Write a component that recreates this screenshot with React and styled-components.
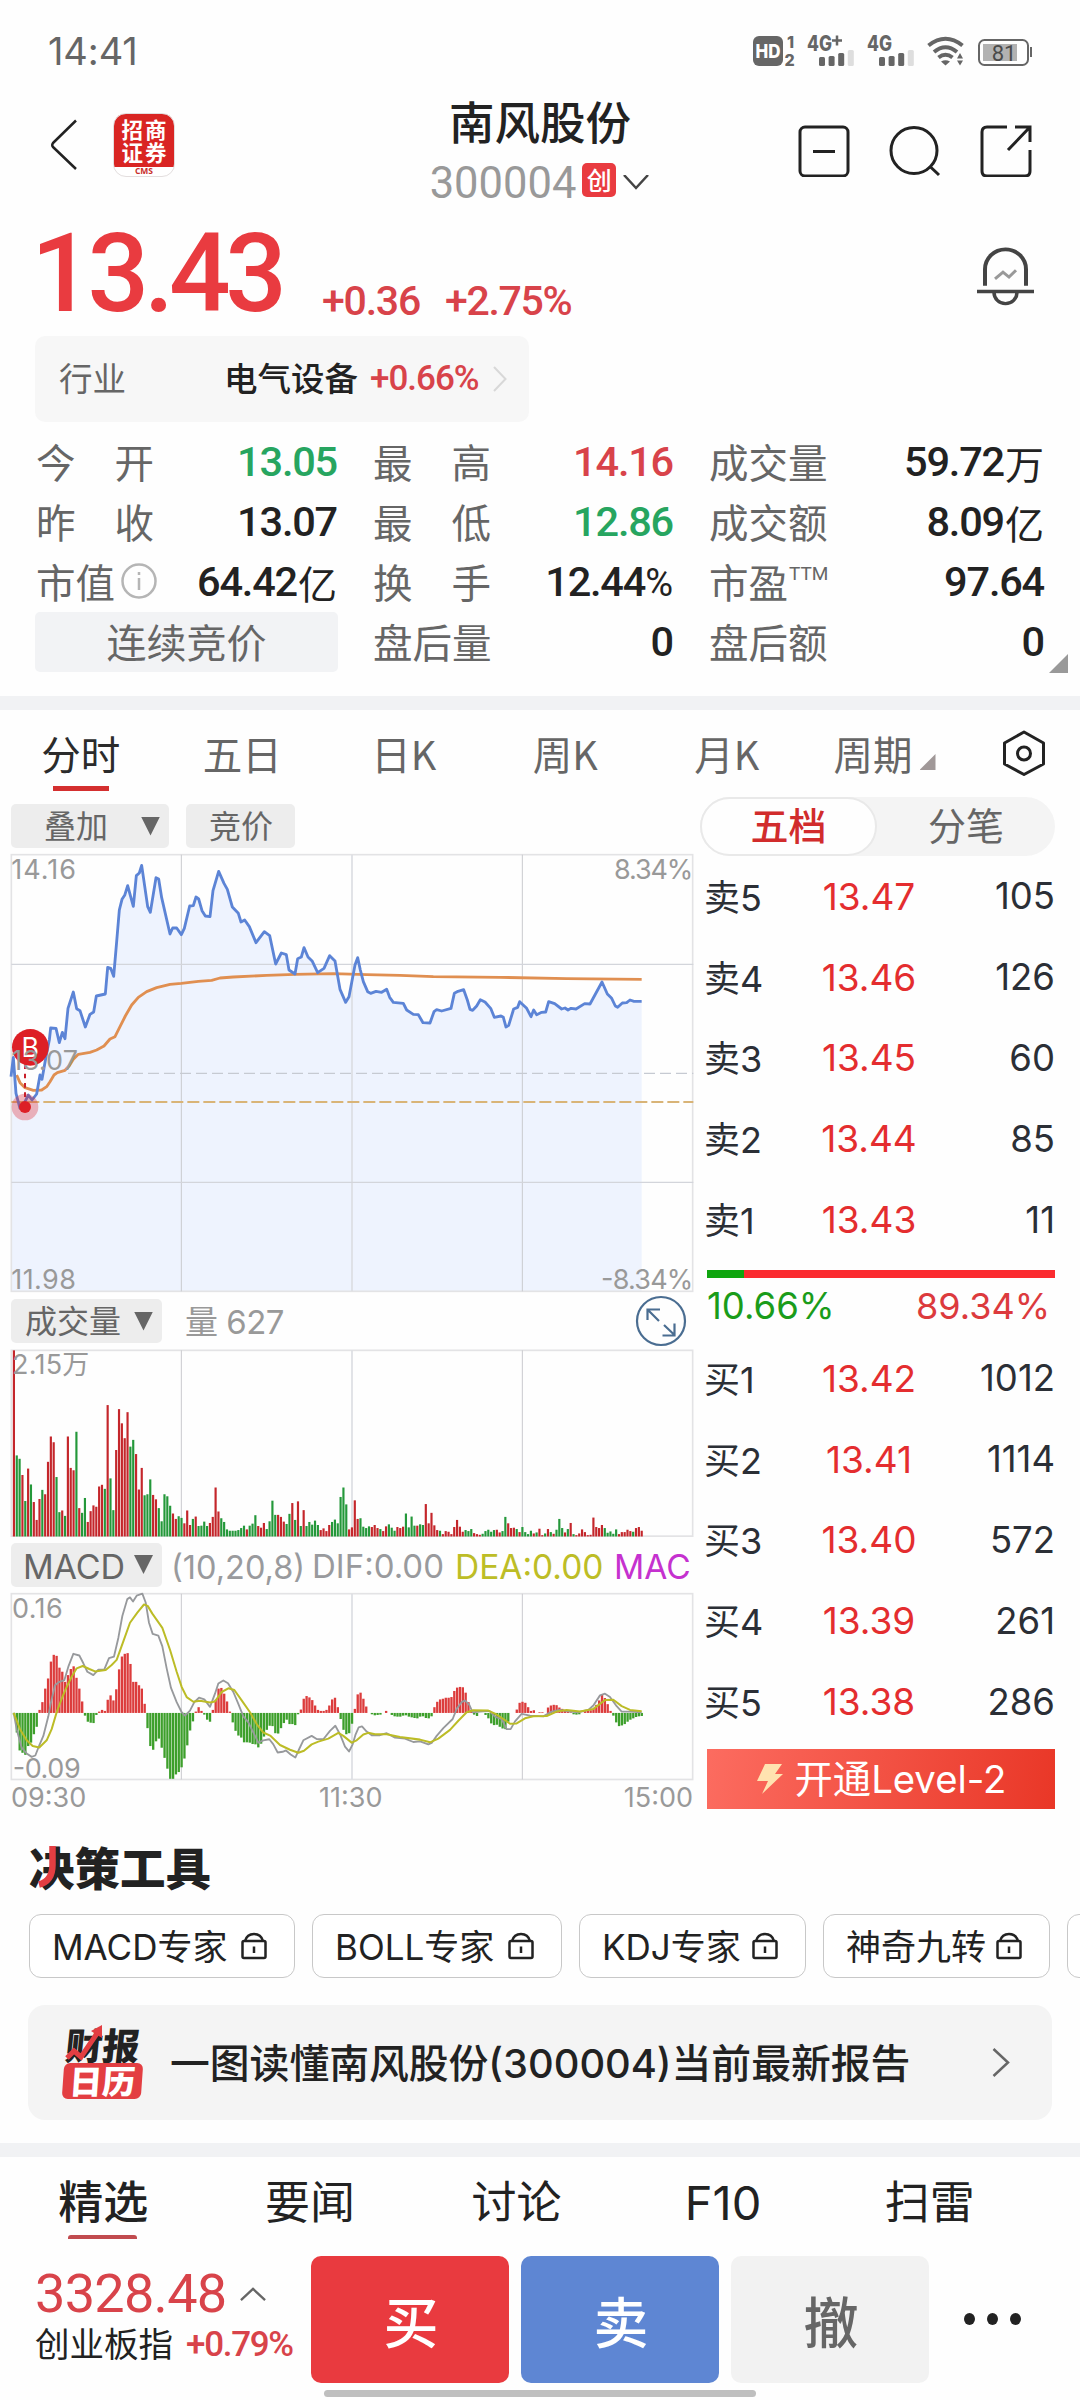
import React from "react";
import styled, { createGlobalStyle, css } from "styled-components";

const SANS = `Inter, "Noto Sans CJK SC", sans-serif`;
const DIN = `Roboto, "Noto Sans CJK SC", sans-serif`;
const RED = "#e93b40";
const UP = "#d8434a";
const DOWN = "#27a560";
const INK = "#222222";
const GREY = "#666666";

const Global = createGlobalStyle`
  * { box-sizing: border-box; }
  html, body { margin: 0; padding: 0; background: #fefefe; }
  body { overflow: hidden; }
`;

const Page = styled.div`
  width: 1080px;
  height: 2400px;
  overflow: hidden;
  background: #fefefe;
  font-family: ${SANS};
  color: ${INK};
  display: flex;
  flex-direction: column;
  white-space: nowrap;
`;

const Txt = styled.span`
  font-family: ${(p) => (p.$din ? DIN : SANS)};
  font-size: ${(p) => p.$size}px;
  line-height: ${(p) => p.$lh || p.$size * 1.2}px;
  font-weight: ${(p) => p.$w || 400};
  letter-spacing: ${(p) => p.$ls || 0}px;
  width: ${(p) => (p.$width ? `${p.$width}px` : "auto")};
  padding-top: ${(p) => p.$drop || 0}px;
  color: ${(p) => p.$c || "inherit"};
  display: block;
`;

/* ---------- status bar ---------- */
const StatusBar = styled.div`
  height: 102px;
  flex: none;
  padding: 0 48px;
  display: flex;
  align-items: center;
  justify-content: space-between;
  color: ${GREY};
`;
const StatusIcons = styled.svg`
  width: 284px;
  height: 40px;
  margin-right: -2px;
`;

/* ---------- header ---------- */
const Header = styled.header`
  height: 110px;
  flex: none;
  display: grid;
  grid-template-columns: 380px 320px 380px;
`;
const HeaderLeft = styled.div`
  display: flex;
  padding: 11px 0 0 50px;
  gap: 35px;
`;
const BackIcon = styled.svg`
  width: 28px;
  height: 51px;
  margin-top: 6px;
`;
const Brand = styled.div`
  width: 62px;
  height: 64px;
  border-radius: 13px;
  border: 1px solid #e3dede;
  background: linear-gradient(#d92523 53px, #ffffff 53px);
  display: flex;
  flex-direction: column;
  align-items: center;
`;
const BrandLine = styled.div`
  height: 23px;
  color: #fff;
  font: 700 21.5px/23px "Noto Sans CJK SC", sans-serif;
  letter-spacing: 2px;
  padding-left: 2px;
  position: relative;
  top: 3px;
`;
const BrandFoot = styled.div`
  font: 700 8.5px/10px "Open Sans", sans-serif;
  margin-top: 6px;
  color: #c9302c;
`;
const TitleBlock = styled.div`
  display: flex;
  flex-direction: column;
  align-items: center;
  margin-top: -1px;
`;
const CodeLine = styled.div`
  display: flex;
  align-items: center;
  height: 40px;
  margin-top: 16px;
  margin-left: -1px;
`;
const BoardBadge = styled.span`
  width: 34px;
  height: 34px;
  margin: -6px 7px 0 6px;
  border-radius: 5px;
  background: ${RED};
  color: #fff;
  font: 500 25px/33px "Noto Sans CJK SC", sans-serif;
  text-align: center;
`;
const HeaderActions = styled.div`
  display: flex;
  justify-content: flex-end;
  gap: 39px;
  padding: 22px 48px 0 0;
`;
const ActionIcon = styled.svg`
  width: 52px;
  height: 53px;
`;

/* ---------- price ---------- */
const PriceRow = styled.section`
  height: 124px;
  flex: none;
  display: flex;
  padding: 0 45px 0 31px;
`;
const LastPrice = styled(Txt)`
  margin-top: -3px;
`;
const Changes = styled.div`
  display: flex;
  padding-top: 65px;
`;
const Bell = styled.svg`
  width: 60px;
  height: 62px;
  margin: 34px 0 0 auto;
`;
const Industry = styled.div`
  flex: none;
  width: 494px;
  height: 86px;
  margin-left: 35px;
  padding: 0 22px 0 24px;
  border-radius: 10px;
  background: #f7f7f7;
  display: flex;
  align-items: center;
`;
const IndustryName = styled(Txt)`
  margin-left: 98px;
  margin-right: 12px;
`;

/* ---------- stats ---------- */
const Stats = styled.section`
  flex: none;
  height: 274px;
  position: relative;
  padding: 16px 36px 0 36px;
  display: grid;
  grid-template-columns: 301px 300px 335px;
  grid-auto-rows: 48px;
  row-gap: 12px;
  column-gap: 36px;
`;
const Stat = styled.div`
  display: flex;
  align-items: center;
  justify-content: space-between;
`;
const StatLabel = styled.span`
  width: 118px;
  display: flex;
  align-items: center;
  justify-content: ${(p) => (p.$spread ? "space-between" : "flex-start")};
  font: 400 39.5px/46px "Noto Sans CJK SC", sans-serif;
  padding-bottom: 2px;
  color: ${GREY};
`;
const StatValue = styled.span`
  display: flex;
  align-items: center;
  font: 500 41.5px/48px ${DIN};
  letter-spacing: -1.2px;
  color: ${(p) => p.$c || INK};
`;
const Unit = styled.span`
  font: 400 39px/46px "Noto Sans CJK SC", sans-serif;
  letter-spacing: 0;
  margin-left: 1px;
`;
const Percent = styled.span`
  font-size: 38px;
  font-weight: 400;
  letter-spacing: 0;
  padding-top: 2px;
`;
const Sup = styled.sup`
  font: 400 19px/20px Roboto, sans-serif;
  margin-top: -14px;
  margin-left: 1px;
`;
const InfoIcon = styled.svg`
  width: 38px;
  height: 38px;
  margin-left: 5px;
  flex: none;
`;
const Phase = styled.div`
  align-self: center;
  height: 60px;
  margin: 0 -1px 0 -1px;
  border-radius: 5px;
  background: #f2f3f5;
  color: ${GREY};
  font: 400 40px/59px "Noto Sans CJK SC", sans-serif;
  text-align: center;
`;
const Corner = styled.span`
  position: absolute;
  right: 12px;
  top: 232px;
  width: 19px;
  height: 19px;
  background: #999;
  clip-path: polygon(100% 0, 100% 100%, 0 100%);
`;
const Divider = styled.div`
  height: ${(p) => p.$h}px;
  flex: none;
  background: #f1f2f4;
`;

/* ---------- period tabs ---------- */
const Tabs = styled.nav`
  height: 87px;
  flex: none;
  display: flex;
  padding-top: 14px;
`;
const Tab = styled.div`
  width: 161.5px;
  position: relative;
  display: flex;
  justify-content: center;
  font: 400 39.5px/58px "Noto Sans CJK SC", sans-serif;
  color: ${(p) => (p.$on ? "#2b2b2b" : GREY)};
  ${(p) =>
    p.$on &&
    css`
      &::after {
        content: "";
        position: absolute;
        left: 53px;
        top: 62px;
        width: 56px;
        height: 5px;
        background: #d42f2f;
      }
    `}
`;
const MoreTab = styled(Tab)`
  width: 128px;
  justify-content: flex-end;
`;
const MoreCorner = styled.span`
  width: 16px;
  height: 16px;
  margin: 30px 0 0 7px;
  background: #a09898;
  clip-path: polygon(100% 0, 100% 100%, 0 100%);
`;
const Hex = styled.svg`
  width: 44px;
  height: 48px;
  margin: 5px 0 0 66px;
`;

/* ---------- charts ---------- */
const Main = styled.section`
  flex: none;
  height: 1033px;
  display: flex;
`;
const ChartColumn = styled.div`
  width: 683px;
  margin-left: 11px;
  padding-top: 7px;
  display: flex;
  flex-direction: column;
`;
const ChartBar = styled.div`
  height: 44px;
  flex: none;
  margin-bottom: ${(p) => p.$mb}px;
  display: flex;
  align-items: center;
  position: relative;
`;
const Picker = styled.div`
  width: ${(p) => p.$width}px;
  height: 44px;
  margin-right: ${(p) => p.$mr || 0}px;
  padding: 0 ${(p) => p.$pr || 0}px 0 ${(p) => p.$pl}px;
  border-radius: 5px;
  background: #ededed;
  color: ${GREY};
  display: flex;
  align-items: center;
  justify-content: space-between;
`;
const Caret = styled.span`
  width: 19px;
  height: 19px;
  background: #666;
  clip-path: polygon(0 0, 100% 0, 50% 100%);
`;
const Expand = styled.svg`
  width: 52px;
  height: 52px;
  position: absolute;
  right: 7px;
  top: -4px;
`;
const Plot = styled.svg`
  width: 683px;
  height: ${(p) => p.$h}px;
  margin-bottom: ${(p) => p.$mb || 0}px;
  display: block;
  flex: none;
  overflow: visible;
  text {
    font-family: ${SANS};
    fill: #999;
  }
`;
const TimeAxis = styled.div`
  display: flex;
  justify-content: space-between;
  color: #999;
  padding: 0 1px 0 0;
`;

/* ---------- order book ---------- */
const BookColumn = styled.div`
  width: 355px;
  margin-left: 6px;
  display: flex;
  flex-direction: column;
`;
const Switch = styled.div`
  height: 59px;
  border-radius: 30px;
  background: #f4f4f4;
  display: flex;
`;
const SwitchItem = styled.div`
  width: ${(p) => (p.$on ? 177 : 178)}px;
  border-radius: 30px;
  border: 2px solid ${(p) => (p.$on ? "#e9e9e9" : "transparent")};
  background: ${(p) => (p.$on ? "#fefefe" : "transparent")};
  color: ${(p) => (p.$on ? "#d12c2c" : GREY)};
  font: ${(p) => (p.$on ? 500 : 400)} 38px/50px "Noto Sans CJK SC", sans-serif;
  text-align: center;
`;
const Level = styled.div`
  height: 80.8px;
  padding: 0 0 0 4px;
  display: grid;
  grid-template-columns: 119px 92px 1fr;
  align-items: center;
  font-size: 36.5px;
  color: #2b2f36;
`;
const LevelName = styled.span`
  font-size: 36px;
  padding-bottom: 3px;
`;
const LevelPrice = styled.span`
  color: #e42d2f;
  font-size: 37px;
  display: flex;
  justify-content: center;
`;
const LevelQty = styled.span`
  text-align: right;
`;
const Ratio = styled.div`
  margin: 10px 0 0 7px;
  height: 8px;
  display: flex;
  background: #fb2b2f;
`;
const RatioBuy = styled.div`
  background: #0fa50f;
`;
const RatioText = styled.div`
  height: 60px;
  display: flex;
  align-items: center;
  justify-content: space-between;
  padding: 0 5px 2px 7px;
`;
const LevelTwo = styled.div`
  height: 60px;
  margin: 7px 0 0 7px;
  background: linear-gradient(100deg, #fc6c60, #e93727);
  color: #fff;
  display: flex;
  align-items: center;
  justify-content: center;
  gap: 11px;
`;

/* ---------- tools ---------- */
const Tools = styled.section`
  flex: none;
  height: 313px;
  padding: 10px 0 0 28px;
`;
const ToolsTitle = styled.h2`
  margin: 0 0 0 1px;
  height: 74px;
  position: relative;
  font: 900 45.5px/52px "Noto Sans CJK SC", sans-serif;
`;
const Stroke = styled.svg`
  position: absolute;
  left: 6px;
  top: 5px;
  width: 28px;
  height: 46px;
`;
const Chips = styled.div`
  display: flex;
  gap: 17px;
  margin-left: 1px;
`;
const Chip = styled.div`
  flex: none;
  width: ${(p) => p.$width}px;
  height: 64px;
  padding: 0 27px 0 22px;
  border: 1px solid #c8c8c8;
  border-radius: 12px;
  background: #fff;
  display: flex;
  align-items: center;
  justify-content: space-between;
`;
const Lock = styled.svg`
  width: 26px;
  height: 28px;
  flex: none;
`;
const Banner = styled.div`
  width: 1024px;
  height: 115px;
  margin-top: 27px;
  padding: 0 42px 0 34px;
  border-radius: 17px;
  background: #f4f4f4;
  display: flex;
  align-items: center;
`;
const Calendar = styled.div`
  width: 84px;
  height: 76px;
  margin-right: 24px;
  position: relative;
`;
const CalTop = styled.div`
  font: 900 37px/38px "Noto Sans CJK SC", sans-serif;
  transform: skewX(-6deg);
  padding-left: 4px;
  height: 38px;
`;
const CalBottom = styled.div`
  width: 79px;
  height: 36px;
  border-radius: 6px;
  transform: skewX(-4deg);
  margin-left: 1px;
  background: #e33e42;
  color: #fff;
  font: 900 33px/34px "Noto Sans CJK SC", sans-serif;
  text-align: center;
`;
const CalArrow = styled.svg`
  position: absolute;
  left: 2px;
  top: 0;
  width: 44px;
  height: 36px;
`;
const Chevron = styled.svg`
  width: ${(p) => p.$w}px;
  height: ${(p) => p.$h}px;
  margin-left: ${(p) => p.$ml || 0};
  flex: none;
`;

/* ---------- info tabs and trade bar ---------- */
const InfoTabs = styled.nav`
  height: 90px;
  flex: none;
  display: flex;
  padding: 0 47px 0 0;
`;
const InfoTab = styled.div`
  width: 206.8px;
  position: relative;
  display: flex;
  justify-content: center;
  font: 400 ${(p) => p.$size || 45}px/92px ${SANS};
  ${(p) =>
    p.$on &&
    css`
      font-weight: 500;
      &::after {
        content: "";
        position: absolute;
        left: 68px;
        bottom: 8px;
        width: 69px;
        height: 4px;
        border-radius: 3px 3px 0 0;
        background: #c14b4f;
      }
    `}
`;
const TradeBar = styled.footer`
  flex: none;
  height: 136px;
  display: flex;
  padding: 9px 0 0 35px;
`;
const Index = styled.div`
  width: 276px;
  padding-top: 8px;
`;
const IndexLine = styled.div`
  display: flex;
  align-items: center;
  gap: ${(p) => p.$gap}px;
  height: ${(p) => p.$h}px;
`;
const TradeButton = styled.button`
  width: 198px;
  height: 127px;
  margin: 0 12px 0 0;
  padding: 0 0 0 2px;
  border: 0;
  border-radius: 10px;
  background: ${(p) => p.$bg};
  color: ${(p) => p.$c || "#fff"};
  font: 500 55px/127px "Noto Sans CJK SC", sans-serif;
`;
const Dots = styled.div`
  display: flex;
  gap: 12px;
  padding: 57px 0 0 23px;
`;
const Dot = styled.span`
  width: 11px;
  height: 12px;
  border-radius: 50%;
  background: #222;
`;
const HomeBar = styled.div`
  width: 432px;
  height: 7px;
  flex: none;
  margin: 7px 0 0 324px;
  border-radius: 4px;
  background: #bfbfbf;
`;

/* ---------- data ---------- */
const PRICE =
  "33,830 40,772 48,880 60,925 75,905 85,885 96,900 110,882 120,825 126,838 138,770 148,720 152,684 168,685 178,728 187,697 195,716 204,625 220,576 230,626 240,632 256,681 270,643 281,636 289,588 316,582 323,502 332,505 341,529 350,425 358,330 366,298 374,286 383,257 400,319 409,227 418,219 425,196 443,320 451,337 468,233 476,237 485,293 510,402 518,384 530,384 544,404 553,385 569,318 580,317 588,291 596,297 606,332 616,348 630,350 639,272 656,214 672,250 682,268 697,321 715,340 723,366 734,360 748,380 768,428 793,395 809,407 827,492 844,459 859,464 867,510 885,522 893,476 904,471 912,443 924,471 937,484 953,518 972,505 989,467 1005,483 1020,568 1037,607 1047,590 1065,495 1073,473 1081,510 1090,545 1103,575 1112,580 1128,574 1145,577 1160,568 1169,592 1180,607 1210,610 1220,630 1240,643 1255,644 1269,668 1290,669 1302,635 1310,629 1325,633 1353,625 1363,580 1374,574 1391,569 1402,600 1410,628 1418,631 1430,618 1441,599 1455,606 1472,625 1483,652 1503,648 1510,652 1518,681 1526,676 1541,627 1553,622 1559,605 1580,625 1593,650 1601,630 1610,644 1625,637 1637,636 1646,605 1664,611 1685,627 1695,624 1704,630 1713,625 1728,627 1754,611 1770,612 1806,546 1822,582 1835,595 1846,618 1853,622 1867,609 1880,608 1890,600 1902,604 1925,604";
const AVERAGE =
  "50,825 60,848 75,863 100,871 125,870 140,860 150,845 162,825 172,818 195,811 208,797 220,778 235,763 270,757 290,750 312,738 330,717 345,710 360,680 376,648 395,615 415,592 440,575 470,563 510,553 544,550 595,544 635,541 660,534 700,531 800,526 885,523 1000,521 1100,524 1200,526 1300,530 1500,532 1700,536 1925,538";
const DIF =
  "41,1252 50,1300 65,1355 80,1372 95,1382 106,1378 115,1355 130,1320 145,1262 152,1225 165,1170 178,1160 193,1155 205,1115 220,1077 238,1082 250,1105 262,1130 280,1140 295,1124 313,1123 327,1090 342,1085 355,1030 367,965 382,915 390,910 399,922 410,905 427,899 437,925 447,985 458,1018 475,1023 487,1055 500,1120 513,1178 530,1220 545,1250 555,1260 570,1245 583,1220 597,1207 613,1212 630,1234 645,1195 655,1165 670,1156 684,1164 700,1190 715,1225 730,1262 745,1280 765,1320 775,1340 790,1333 808,1330 820,1345 833,1369 848,1367 858,1363 872,1375 886,1384 898,1358 910,1333 935,1320 950,1329 970,1330 990,1305 1006,1290 1020,1315 1035,1352 1047,1366 1058,1345 1066,1318 1076,1295 1086,1292 1100,1307 1115,1318 1140,1318 1160,1312 1185,1325 1215,1328 1240,1338 1260,1336 1285,1345 1295,1341 1310,1320 1330,1297 1358,1270 1370,1240 1385,1220 1395,1215 1408,1228 1418,1250 1440,1248 1468,1246 1485,1263 1505,1270 1520,1300 1532,1300 1545,1277 1565,1255 1590,1260 1630,1262 1655,1248 1680,1243 1710,1248 1735,1250 1765,1243 1780,1230 1800,1200 1815,1195 1830,1205 1850,1232 1865,1248 1890,1248 1925,1250";
const DEA =
  "41,1252 60,1300 80,1333 98,1350 118,1354 140,1333 155,1300 170,1250 185,1210 200,1175 215,1145 230,1120 248,1113 268,1122 285,1129 317,1125 335,1110 350,1095 370,1040 390,985 412,955 432,931 443,935 457,958 487,1000 510,1065 530,1130 545,1175 560,1205 580,1219 600,1216 630,1221 645,1218 665,1190 685,1179 703,1184 725,1215 750,1250 770,1285 790,1310 812,1320 840,1347 870,1361 895,1370 912,1364 935,1345 955,1337 985,1328 1015,1311 1030,1320 1055,1340 1070,1333 1090,1316 1105,1311 1125,1315 1160,1315 1200,1323 1260,1331 1290,1339 1315,1328 1350,1302 1375,1275 1400,1250 1420,1244 1465,1245 1485,1254 1510,1270 1530,1284 1550,1283 1575,1268 1600,1262 1640,1261 1670,1248 1700,1243 1740,1248 1780,1240 1800,1225 1815,1214 1840,1213 1865,1232 1890,1243 1925,1247";

const VOLUME =
  "178r 489g 499g 547r 624g 528r 575g 627r 680r 618r 591g 604r 508r 433r 450r 553g 657g 652r 668g 433r 526r 533r 419g 645r 659g 615g 686r 654r 637r 641r 581r 576r 588g 340r 557g 651g 473r 352r 394r 438r 361r 463g 443g 485r 590r 526r 607g 604g 560g 606r 619r 645g 684g 604g 610g 638g 661r 677r 669g 674g 690r 652r 695r 677g 670r 698g 697g 685g 698g 689r 671r 584r 655r 675g 686g 708g 712g 712g 712g 710g 704g 697g 708r 697g 691g 666g 698r 703r 689r 707g 684g 623g 665g 665r 671r 685r 692g 662g 630r 680g 625r 698g 651r 698g 686g 694g 682g 695g 710r 705r 713r 695r 686g 679g 690g 612g 584g 634g 708r 702r 622r 677r 675g 700g 704g 699g 701r 695r 704r 707g 713r 699r 693g 703g 712g 701r 704r 700r 661g 702g 670g 697g 697r 693g 695g 633r 690r 659r 696r 710r 712g 722r 713r 715r 722r 701r 680r 700r 715r 710g 713g 707g 719r 722r 724r 721g 713g 709g 715g 710g 709r 717r 713g 671g 690r 704r 703r 707g 716r 701g 716g 722g 712g 720r 717g 706r 725r 720g 707r 716g 721r 709g 677g 704g 717r 707g 689r 722g 725r 720r 708r 716r 725r 724r 673r 701r 704r 695r 704g 718g 714g 721g 708g 722r 716r 716r 709r 713r 715g 704r 701r 712r";
const HIST = [
  1258, 1310, 1363, 1370, 1376, 1350, 1340, 1315, 1293, 1243, 1220, 1180, 1150, 1100, 1080, 1083, 1118, 1130, 1160, 1140,
  1122, 1114, 1148, 1180, 1218, 1260, 1278, 1281, 1282, 1258, 1248, 1243, 1246, 1213, 1200, 1215, 1182, 1123, 1085, 1077,
  1075, 1107, 1160, 1160, 1170, 1180, 1225, 1297, 1350, 1361, 1336, 1328, 1355, 1385, 1417, 1447, 1447, 1434, 1427, 1413,
  1387, 1348, 1304, 1277, 1248, 1235, 1246, 1257, 1272, 1278, 1243, 1213, 1180, 1178, 1195, 1218, 1248, 1280, 1305, 1319,
  1325, 1339, 1339, 1340, 1344, 1345, 1354, 1343, 1322, 1302, 1290, 1291, 1312, 1313, 1297, 1282, 1272, 1285, 1285, 1288,
  1256, 1242, 1210, 1202, 1206, 1214, 1230, 1243, 1246, 1246, 1243, 1230, 1212, 1207, 1235, 1270, 1302, 1315, 1312, 1284,
  1240, 1197, 1192, 1210, 1233, 1252, 1256, 1259, 1258, 1257, 1252, 1246, 1252, 1258, 1262, 1263, 1263, 1260, 1259, 1263,
  1265, 1267, 1268, 1263, 1262, 1267, 1268, 1262, 1235, 1219, 1212, 1210, 1207, 1207, 1205, 1187, 1177, 1175, 1176, 1192,
  1220, 1243, 1257, 1261, 1252, 1252, 1258, 1268, 1283, 1288, 1287, 1293, 1298, 1300, 1278, 1252, 1252, 1242, 1222, 1219,
  1222, 1235, 1246, 1244, 1252, 1250, 1250, 1252, 1236, 1230, 1228, 1229, 1236, 1240, 1246, 1246, 1250, 1256, 1257, 1256,
  1252, 1246, 1246, 1244, 1240, 1228, 1215, 1198, 1208, 1226, 1246, 1260, 1280, 1291, 1289, 1285, 1278, 1272, 1268, 1264,
  1262, 1261,
];
const SELLS = [
  ["卖5", "13.47", "105"],
  ["卖4", "13.46", "126"],
  ["卖3", "13.45", "60"],
  ["卖2", "13.44", "85"],
  ["卖1", "13.43", "11"],
];
const BUYS = [
  ["买1", "13.42", "1012"],
  ["买2", "13.41", "1114"],
  ["买3", "13.40", "572"],
  ["买4", "13.39", "261"],
  ["买5", "13.38", "286"],
];
const CHIPS = [
  ["MACD专家", 266],
  ["BOLL专家", 250],
  ["KDJ专家", 227],
  ["神奇九转", 227],
];
const STEP = 8.522;

function Frame({ top, bottom }) {
  return (
    <>
      <rect x="34" y={top} width="2044" height={bottom - top} fill="none" stroke="#e3e3e5" strokeWidth="5" />
      <path d={`M544 ${top}V${bottom}M1567 ${top}V${bottom}`} stroke="#c9cace" strokeWidth="3" />
      <path d={`M1056 ${top}V${bottom}`} stroke="#dcdee3" strokeWidth="5" />
    </>
  );
}

function PriceChart() {
  return (
    <Plot $h={438} $mb={7} viewBox="33 162 2049 1314">
      <polygon points={`${PRICE} 1925,1474 33,1474`} fill="#eef3fe" />
      <Frame top={164} bottom={1474} />
      <path d="M34 493H2080M34 1147H2080" stroke="#d3d5db" strokeWidth="3.5" />
      <path d="M204 820H2080" stroke="#c6cad2" strokeWidth="3.5" strokeDasharray="33 15" />
      <path d="M34 906H2080" stroke="#d9b477" strokeWidth="6" strokeDasharray="36 12" />
      <polyline points={AVERAGE} fill="none" stroke="#e08f51" strokeWidth="8.5" strokeLinejoin="round" />
      <polyline points={PRICE} fill="none" stroke="#5c84d6" strokeWidth="8.5" strokeLinejoin="round" />
      <circle cx="75" cy="921" r="40" fill="#dd1f2a" opacity="0.32" />
      <circle cx="75" cy="921" r="18" fill="#dd1f26" />
      <path d="M75 793V905" stroke="#c9202b" strokeWidth="6" strokeDasharray="14 14" />
      <circle cx="91" cy="742" r="55" fill="#dd1f26" />
      <text x="91" y="770" fontSize="80" textAnchor="middle" style={{ fill: "#fff" }}>B</text>
      <text x="34" y="237" fontSize="81" textLength="194">14.16</text>
      <text x="34" y="811" fontSize="81" textLength="200">13.07</text>
      <text x="34" y="1467" fontSize="81" textLength="194">11.98</text>
      <text x="1842" y="237" fontSize="81" textLength="238">8.34%</text>
      <text x="1803" y="1467" fontSize="81" textLength="277">-8.34%</text>
    </Plot>
  );
}

function VolumeChart() {
  return (
    <Plot $h={188.5} $mb={5} viewBox="33 174 2049 558" preserveAspectRatio="none">
      <Frame top={178} bottom={728} />
      {VOLUME.split(" ").map((bar, i) => {
        const y = parseInt(bar, 10);
        return (
          <rect key={i} x={38.5 + i * STEP} y={y} width="6.5" height={729 - y} fill={bar.endsWith("r") ? "#c4262b" : "#24983a"} />
        );
      })}
      <text x="36" y="248" fontSize="81" textLength="232">2.15万</text>
    </Plot>
  );
}

function MacdChart() {
  return (
    <Plot $h={188.5} viewBox="33 894 2049 558" preserveAspectRatio="none">
      <Frame top={899} bottom={1449} />
      {HIST.map((y, i) =>
        y === 1252 ? null : (
          <rect
            key={i}
            x={38.5 + i * STEP}
            y={Math.min(y, 1252)}
            width="7"
            height={Math.abs(1252 - y)}
            fill={y < 1252 ? "#dc3c3c" : "#3d9f2b"}
          />
        )
      )}
      <polyline points={DIF} fill="none" stroke="#97999c" strokeWidth="5.5" strokeLinejoin="round" />
      <polyline points={DEA} fill="none" stroke="#bcbc26" strokeWidth="6" strokeLinejoin="round" />
      <text x="36" y="970" fontSize="81" textLength="152">0.16</text>
      <text x="38" y="1444" fontSize="81" textLength="204">-0.09</text>
    </Plot>
  );
}

function LevelRow({ row }) {
  return (
    <Level>
      <LevelName>{row[0]}</LevelName>
      <LevelPrice>{row[1]}</LevelPrice>
      <LevelQty>{row[2]}</LevelQty>
    </Level>
  );
}

function StatCell({ label, value, unit, color, spread, children }) {
  return (
    <Stat>
      <StatLabel $spread={spread}>
        {spread ? [...label].map((c) => <span key={c}>{c}</span>) : label}
        {children}
      </StatLabel>
      <StatValue $c={color}>
        {value}
        {unit === "%" ? <Percent>%</Percent> : unit && <Unit>{unit}</Unit>}
      </StatValue>
    </Stat>
  );
}

export default function App() {
  return (
    <Page>
      <Global />
      <StatusBar>
        <Txt $size={38} $ls={-0.1} $drop={1}>14:41</Txt>
        <StatusIcons viewBox="750 31 284 40" fill="#666">
          <rect x="753" y="36" width="30" height="30" rx="6" />
          <g fontFamily="Inter, sans-serif" fontWeight="800">
            <text x="755.5" y="58" fontSize="19" fill="#fff" textLength="25" lengthAdjust="spacingAndGlyphs">HD</text>
            <text x="787" y="48" fontSize="16">1</text>
            <text x="784.5" y="66" fontSize="16">2</text>
            <text x="807" y="51" fontSize="21" textLength="25" lengthAdjust="spacingAndGlyphs">4G</text>
            <text x="867" y="51" fontSize="21" textLength="25" lengthAdjust="spacingAndGlyphs">4G</text>
          </g>
          <path d="M832 40.5H842M837 35.5V45.5" stroke="#666" strokeWidth="2.5" />
          {[819, 879].map((x) => (
            <g key={x}>
              <rect x={x} y="57" width="6" height="9" rx="1.5" />
              <rect x={x + 9.6} y="56" width="6" height="10" rx="1.5" />
              <rect x={x + 19.2} y="53" width="6" height="13" rx="1.5" />
              <rect x={x + 28.8} y="50" width="6" height="16" rx="1.5" fill="#dedede" />
            </g>
          ))}
          <g fill="none" stroke="#666" strokeWidth="4">
            <path d="M928.5 45.5Q945.5 32 962.5 45.5" />
            <path d="M934 52Q945.5 42.5 957 52" />
            <path d="M938.5 57.5Q945.5 52 952.5 57.5" />
          </g>
          <path d="M941 61.5Q945.5 59 950 61.5L945.5 65.5Z" />
          <path d="M957 58.5L960 53L963 58.5ZM957 60.5L960 65.5L963 60.5Z" />
          <rect x="979" y="40" width="49" height="25" rx="5.5" fill="none" stroke="#666" strokeWidth="2" />
          <rect x="983" y="44" width="34" height="17" fill="#b2b2b2" />
          <rect x="1030" y="47" width="2" height="10" />
          <text x="1004" y="60.5" fontFamily="Roboto, sans-serif" fontSize="22" fill="#4a4a4a" textAnchor="middle">81</text>
        </StatusIcons>
      </StatusBar>

      <Header>
        <HeaderLeft>
          <BackIcon viewBox="0 0 28 51" fill="none" stroke="#222" strokeWidth="2.5" strokeLinejoin="round">
            <path d="M26 1.5L3 24Q1.5 26 3 28L26 50" />
          </BackIcon>
          <Brand>
            <BrandLine>招商</BrandLine>
            <BrandLine>证券</BrandLine>
            <BrandFoot>CMS</BrandFoot>
          </Brand>
        </HeaderLeft>
        <TitleBlock>
          <Txt $size={45.5} $w={500} $lh={46}>南风股份</Txt>
          <CodeLine>
            <Txt $size={43.5} $din $c="#999" $lh={50} $drop={1}>300004</Txt>
            <BoardBadge>创</BoardBadge>
            <Chevron $w={26} $h={16} viewBox="0 0 26 16" fill="none" stroke="#444" strokeWidth="2.5">
              <path d="M1 0L13 13L25 0" />
            </Chevron>
          </CodeLine>
        </TitleBlock>
        <HeaderActions>
          <ActionIcon viewBox="0 0 52 53" fill="none" stroke="#222" strokeWidth="3">
            <rect x="2" y="3" width="48" height="49" rx="5" />
            <path d="M15 27.5H37" />
          </ActionIcon>
          <ActionIcon viewBox="0 0 52 53" fill="none" stroke="#222" strokeWidth="3">
            <circle cx="25" cy="26.5" r="23" />
            <path d="M40.5 42L50 51" />
          </ActionIcon>
          <ActionIcon viewBox="0 0 52 53" fill="none" stroke="#222" strokeWidth="3">
            <path d="M27 3H7Q2 3 2 8V47Q2 52 7 52H45Q50 52 50 47V26" />
            <path d="M35 3H50V18M50 3L28 26" />
          </ActionIcon>
        </HeaderActions>
      </Header>

      <PriceRow>
        <LastPrice $width={291} $din $size={108.5} $w={500} $c={RED} $ls={-5.2}>13.43</LastPrice>
        <Changes>
          <Txt $width={123} $din $size={41} $w={500} $c={UP} $ls={-1.2}>+0.36</Txt>
          <Txt $din $size={41} $w={500} $c={UP} $ls={-1.3}>+2.75%</Txt>
        </Changes>
        <Bell viewBox="975 254 60 64" preserveAspectRatio="none" fill="none" stroke="#444" strokeWidth="4">
          <path d="M985 295V278A20.500 20.500 0 0 1 1026 278V295" />
          <path d="M977 301H1034" strokeWidth="3.5" />
          <path d="M994 302A11.500 11.500 0 0 0 1017 302" strokeWidth="3.5" />
          <path d="M995 288L1003 281L1009 286L1016 279" stroke="#999" strokeWidth="3" />
        </Bell>
      </PriceRow>

      <Industry>
        <Txt $size={33.5} $c={GREY}>行业</Txt>
        <IndustryName $size={33.5} $w={500}>电气设备</IndustryName>
        <Txt $din $size={35} $w={500} $c={UP} $ls={-1}>+0.66%</Txt>
        <Chevron $w={14} $h={26} $ml="14px" viewBox="0 0 14 26" fill="none" stroke="#d8d8d8" strokeWidth="2">
          <path d="M1 1L12.5 13L1 25" />
        </Chevron>
      </Industry>

      <Stats>
        <StatCell label="今开" spread value="13.05" color={DOWN} />
        <StatCell label="最高" spread value="14.16" color={UP} />
        <StatCell label="成交量" value="59.72" unit="万" />
        <StatCell label="昨收" spread value="13.07" />
        <StatCell label="最低" spread value="12.86" color={DOWN} />
        <StatCell label="成交额" value="8.09" unit="亿" />
        <StatCell label="市值" value="64.42" unit="亿">
          <InfoIcon viewBox="0 0 38 38" fill="none" stroke="#b5b5b5" strokeWidth="2.5">
            <circle cx="19" cy="19" r="16.5" />
            <path d="M19 16V28M19 10V13" />
          </InfoIcon>
        </StatCell>
        <StatCell label="换手" spread value="12.44" unit="%" />
        <StatCell label="市盈" value="97.64">
          <Sup>TTM</Sup>
        </StatCell>
        <Phase>连续竞价</Phase>
        <StatCell label="盘后量" value="0" />
        <StatCell label="盘后额" value="0" />
        <Corner />
      </Stats>
      <Divider $h={14} />

      <Tabs>
        <Tab $on>分时</Tab>
        <Tab>五日</Tab>
        <Tab>日K</Tab>
        <Tab>周K</Tab>
        <Tab>月K</Tab>
        <MoreTab>
          周期
          <MoreCorner />
        </MoreTab>
        <Hex viewBox="0 0 44 48" fill="none" stroke="#222" strokeWidth="3">
          <path d="M22 3L41.500 14V35L22 45.500L2.500 35V14Z" strokeLinejoin="round" />
          <circle cx="22" cy="24.5" r="6.5" />
        </Hex>
      </Tabs>

      <Main>
        <ChartColumn>
          <ChartBar $mb={6}>
            <Picker $width={158} $pl={33} $pr={9} $mr={17}>
              <Txt $size={32} $drop={3}>叠加</Txt>
              <Caret />
            </Picker>
            <Picker $width={109} $pl={23}>
              <Txt $size={32} $drop={3}>竞价</Txt>
            </Picker>
          </ChartBar>
          <PriceChart />
          <ChartBar $mb={6}>
            <Picker $width={151} $pl={14} $pr={9} $mr={23}>
              <Txt $size={32} $drop={3}>成交量</Txt>
              <Caret />
            </Picker>
            <Txt $size={33} $c="#999" $ls={-0.5} $drop={3}>量 627</Txt>
            <Expand viewBox="0 0 52 52" fill="none" stroke="#4a6d91" strokeWidth="2.2">
              <circle cx="26" cy="26" r="24" />
              <path d="M12.500 25V14.500H25M13 15L24 26M29 30L39.500 40M27.500 40.500H39.500V28.500" />
            </Expand>
          </ChartBar>
          <VolumeChart />
          <ChartBar $mb={5.5}>
            <Picker $width={151} $pl={12} $pr={9} $mr={9}>
              <Txt $size={34} $ls={-0.1} $drop={5}>MACD</Txt>
              <Caret />
            </Picker>
            <Txt $size={32.5} $width={141} $c="#999a9d" $drop={5}>(10,20,8)</Txt>
            <Txt $size={33} $width={143} $c="#999a9d" $drop={5}>DIF:0.00</Txt>
            <Txt $size={33.5} $width={159} $c="#bdbd26" $drop={5}>DEA:0.00</Txt>
            <Txt $size={33.5} $c="#c531cf" $drop={5}>MAC</Txt>
          </ChartBar>
          <MacdChart />
          <TimeAxis>
            <Txt $size={27} $lh={34}>09:30</Txt>
            <Txt $size={27} $lh={34} $width={72}>11:30</Txt>
            <Txt $size={27} $lh={34}>15:00</Txt>
          </TimeAxis>
        </ChartColumn>

        <BookColumn>
          <Switch>
            <SwitchItem $on>五档</SwitchItem>
            <SwitchItem>分笔</SwitchItem>
          </Switch>
          {SELLS.map((r) => (
            <LevelRow key={r[0]} row={r} />
          ))}
          <Ratio>
            <RatioBuy style={{ width: "10.66%" }} />
          </Ratio>
          <RatioText>
            <Txt $size={36.5} $c="#1a9c1a">10.66%</Txt>
            <Txt $size={36} $c="#dc3a3d">89.34%</Txt>
          </RatioText>
          {BUYS.map((r) => (
            <LevelRow key={r[0]} row={r} />
          ))}
          <LevelTwo>
            <svg width="28" height="32" viewBox="0 0 28 32">
              <path d="M9 1H26L19 11H27L6 31L12 18H1Z" fill="#ffe3b0" />
            </svg>
            <Txt $size={38.3} $drop={3}>开通Level-2</Txt>
          </LevelTwo>
        </BookColumn>
      </Main>

      <Tools>
        <ToolsTitle>
          决策工具
          <Stroke viewBox="0 0 28 46" fill="none" stroke="#e33e42" strokeWidth="6.5">
            <path d="M17.5 1V20Q17.5 36 4 39.5" />
          </Stroke>
        </ToolsTitle>
        <Chips>
          {CHIPS.map(([name, width]) => (
            <Chip key={name} $width={width}>
              <Txt $size={35} $drop={2}>{name}</Txt>
              <Lock viewBox="0 0 26 28" fill="none" stroke="#222" strokeWidth="2.5">
                <rect x="1.5" y="9" width="23" height="17" rx="1.5" />
                <path d="M4 9Q6 2 13 2T22 9M13 14.500V21" />
              </Lock>
            </Chip>
          ))}
          <Chip $width={227} />
        </Chips>
        <Banner>
          <Calendar>
            <CalTop>财报</CalTop>
            <CalBottom>日历</CalBottom>
            <CalArrow viewBox="0 0 44 36" fill="none" stroke="#e33e42" strokeWidth="5">
              <path d="M3 33L10 26L17 32L34 7" />
              <path d="M27 6L38 0L38 13Z" fill="#e33e42" stroke="none" />
            </CalArrow>
          </Calendar>
          <Txt $size={39.8} $w={500} $drop={3}>一图读懂南风股份(300004)当前最新报告</Txt>
          <Chevron $w={18} $h={29} $ml="auto" viewBox="0 0 18 29" fill="none" stroke="#666" strokeWidth="2.5">
            <path d="M1.500 1L16 14.500L1.500 28" />
          </Chevron>
        </Banner>
      </Tools>
      <Divider $h={14} />

      <InfoTabs>
        <InfoTab $on>精选</InfoTab>
        <InfoTab>要闻</InfoTab>
        <InfoTab>讨论</InfoTab>
        <InfoTab $size={47}>F10</InfoTab>
        <InfoTab>扫雷</InfoTab>
      </InfoTabs>
      <TradeBar>
        <Index>
          <IndexLine $gap={14} $h={61}>
            <Txt $din $size={54} $w={400} $c={UP} $ls={-0.7}>3328.48</Txt>
            <Chevron $w={26} $h={15} viewBox="0 0 28 16" fill="none" stroke="#666" strokeWidth="2.5">
              <path d="M1 14L14 2L27 14" />
            </Chevron>
          </IndexLine>
          <IndexLine $gap={13} $h={40}>
            <Txt $size={34.5}>创业板指</Txt>
            <Txt $din $size={35} $w={500} $c={UP} $ls={-1.3}>+0.79%</Txt>
          </IndexLine>
        </Index>
        <TradeButton $bg="#e93a3f">买</TradeButton>
        <TradeButton $bg="#5e86d3">卖</TradeButton>
        <TradeButton $bg="#f2f2f2" $c="#666">撤</TradeButton>
        <Dots>
          <Dot />
          <Dot />
          <Dot />
        </Dots>
      </TradeBar>
      <HomeBar />
    </Page>
  );
}
